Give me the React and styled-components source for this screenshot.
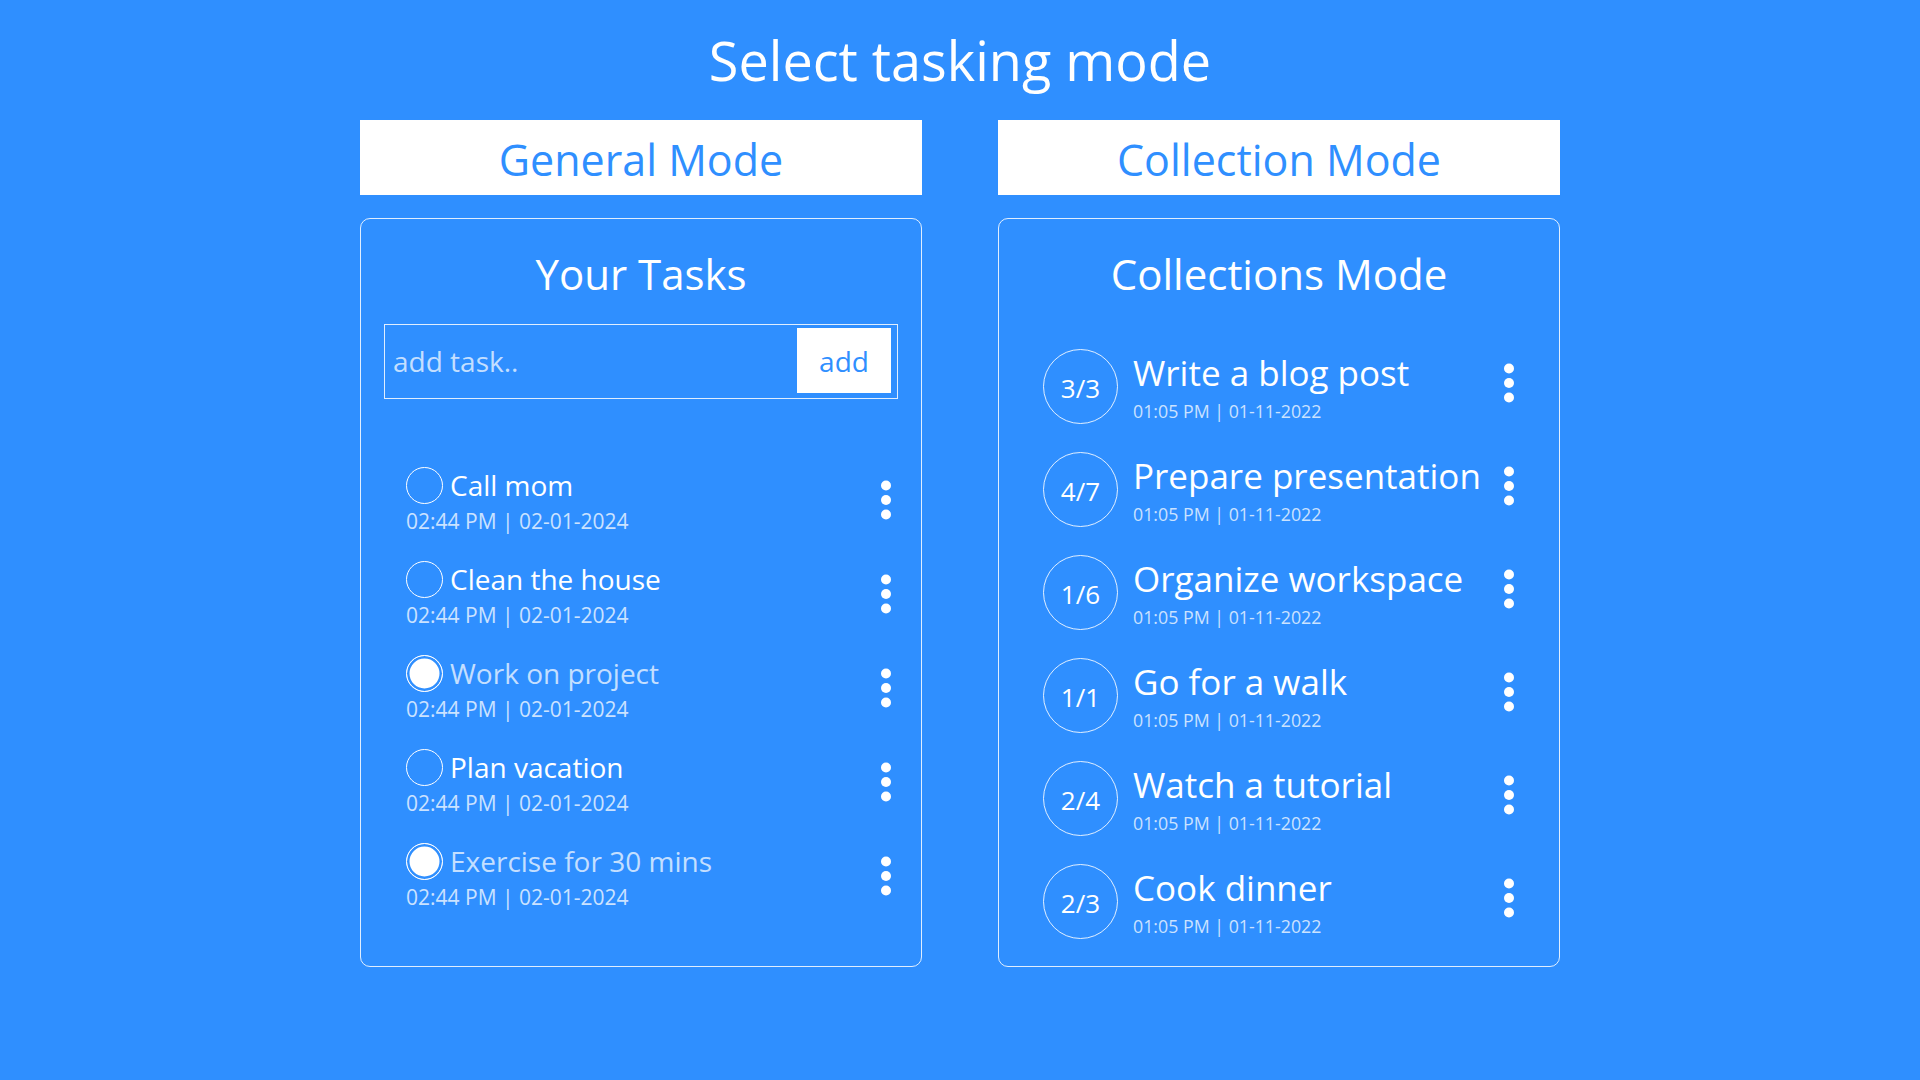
import React from "react";
import styled, { createGlobalStyle } from "styled-components";

const BLUE = "#2f8fff";

const GlobalStyle = createGlobalStyle`
  html, body {
    margin: 0;
    padding: 0;
    background: ${BLUE};
  }
  body {
    font-family: "Segoe UI", "Open Sans", "Noto Sans", sans-serif;
    color: #ffffff;
  }
  * { box-sizing: border-box; }
`;

const Page = styled.main`
  min-height: 100vh;
  padding-top: 28px;
  display: flex;
  flex-direction: column;
  align-items: center;
`;

const Title = styled.h1`
  margin: 0;
  font-size: 54px;
  line-height: 64px;
  font-weight: 400;
  color: #ffffff;
  text-align: center;
`;

const Columns = styled.div`
  display: grid;
  grid-template-columns: 562px 562px;
  column-gap: 76px;
  margin-top: 28px;
`;

const Column = styled.section`
  display: flex;
  flex-direction: column;
  gap: 23px;
`;

const ModeButton = styled.button`
  height: 75px;
  border: none;
  background: #ffffff;
  color: ${BLUE};
  font-family: inherit;
  font-size: 43px;
  line-height: 1;
  padding: 4px 0 0;
  cursor: pointer;
  display: flex;
  align-items: center;
  justify-content: center;
`;

const Panel = styled.div`
  height: 749px;
  border: 1px solid rgba(255, 255, 255, 0.85);
  border-radius: 10px;
  padding-top: 30px;
  display: flex;
  flex-direction: column;
`;

const PanelTitle = styled.h2`
  margin: 0;
  font-size: 42px;
  line-height: 50px;
  font-weight: 400;
  text-align: center;
  color: #ffffff;
`;

const AddForm = styled.form`
  margin: 25px 23px 0;
  height: 75px;
  border: 1px solid rgba(255, 255, 255, 0.85);
  display: flex;
  align-items: stretch;
  padding: 3px 6px 5px 8px;
`;

const TaskInput = styled.input`
  flex: 1;
  min-width: 0;
  background: transparent;
  border: none;
  outline: none;
  color: #ffffff;
  font-family: inherit;
  font-size: 28px;
  padding: 0;
  &::placeholder {
    color: rgba(255, 255, 255, 0.72);
  }
`;

const AddButton = styled.button`
  width: 94px;
  border: none;
  background: #ffffff;
  color: ${BLUE};
  font-family: inherit;
  font-size: 28px;
  padding: 0;
  cursor: pointer;
`;

const TaskList = styled.ul`
  list-style: none;
  margin: 67px 0 0;
  padding: 0 23px 0 45px;
  display: flex;
  flex-direction: column;
  gap: 26px;
`;

const TaskRow = styled.li`
  height: 68px;
  display: flex;
  align-items: center;
  justify-content: space-between;
`;

const TaskMain = styled.div`
  display: flex;
  flex-direction: column;
`;

const TaskHead = styled.div`
  display: flex;
  align-items: center;
  gap: 7px;
`;

const Check = styled.span`
  width: 37px;
  height: 37px;
  border-radius: 50%;
  border: 1.5px solid #ffffff;
  flex: none;
  background: ${(p) => (p.$done ? "#ffffff" : "transparent")};
  box-shadow: ${(p) => (p.$done ? `inset 0 0 0 2.5px ${BLUE}` : "none")};
`;

const TaskName = styled.span`
  font-size: 28px;
  line-height: 37px;
  color: ${(p) => (p.$done ? "rgba(255,255,255,0.72)" : "#ffffff")};
`;

const DateText = styled.span`
  font-size: ${(p) => (p.$small ? "17.8px" : "21px")};
  line-height: ${(p) => (p.$small ? "22px" : "26px")};
  margin-top: ${(p) => (p.$small ? "6px" : "4px")};
  color: rgba(255, 255, 255, 0.75);
  white-space: nowrap;
`;

const DotsButton = styled.button`
  width: 24px;
  height: 40px;
  border: none;
  background: transparent;
  padding: 0;
  margin-bottom: ${(p) => (p.$raised ? "7px" : "0")};
  display: flex;
  align-items: center;
  justify-content: center;
  flex: none;
  cursor: pointer;
`;

const CollectionList = styled.ul`
  list-style: none;
  margin: 50px 0 0;
  padding: 0 38px 0 44px;
  display: flex;
  flex-direction: column;
  gap: 28px;
`;

const CollectionRow = styled.li`
  height: 75px;
  display: flex;
  align-items: center;
`;

const CountCircle = styled.span`
  width: 75px;
  height: 75px;
  border-radius: 50%;
  border: 1px solid rgba(255, 255, 255, 0.85);
  display: flex;
  align-items: center;
  justify-content: center;
  font-size: 26px;
  padding-top: 3px;
  flex: none;
`;

const CollectionText = styled.div`
  flex: 1;
  align-self: flex-start;
  margin: 3px 0 0 15px;
  display: flex;
  flex-direction: column;
`;

const CollectionName = styled.span`
  font-size: 35px;
  line-height: 42px;
  color: #ffffff;
  white-space: nowrap;
`;

const Dots = () => (
  <svg width="24" height="40" viewBox="0 0 24 40" aria-hidden="true">
    <circle cx="12" cy="5.5" r="5" fill="#ffffff" />
    <circle cx="12" cy="20" r="5" fill="#ffffff" />
    <circle cx="12" cy="34.5" r="5" fill="#ffffff" />
  </svg>
);

const tasks = [
  { name: "Call mom", done: false },
  { name: "Clean the house", done: false },
  { name: "Work on project", done: true },
  { name: "Plan vacation", done: false },
  { name: "Exercise for 30 mins", done: true },
];

const collections = [
  { count: "3/3", name: "Write a blog post" },
  { count: "4/7", name: "Prepare presentation" },
  { count: "1/6", name: "Organize workspace" },
  { count: "1/1", name: "Go for a walk" },
  { count: "2/4", name: "Watch a tutorial" },
  { count: "2/3", name: "Cook dinner" },
];

export default function App() {
  return (
    <>
      <GlobalStyle />
      <Page>
        <Title>Select tasking mode</Title>
        <Columns>
          <Column>
            <ModeButton type="button">General Mode</ModeButton>
            <Panel>
              <PanelTitle>Your Tasks</PanelTitle>
              <AddForm onSubmit={(e) => e.preventDefault()}>
                <TaskInput placeholder="add task.." />
                <AddButton type="submit">add</AddButton>
              </AddForm>
              <TaskList>
                {tasks.map((t) => (
                  <TaskRow key={t.name}>
                    <TaskMain>
                      <TaskHead>
                        <Check $done={t.done} />
                        <TaskName $done={t.done}>{t.name}</TaskName>
                      </TaskHead>
                      <DateText>02:44 PM | 02-01-2024</DateText>
                    </TaskMain>
                    <DotsButton type="button">
                      <Dots />
                    </DotsButton>
                  </TaskRow>
                ))}
              </TaskList>
            </Panel>
          </Column>
          <Column>
            <ModeButton type="button">Collection Mode</ModeButton>
            <Panel>
              <PanelTitle>Collections Mode</PanelTitle>
              <CollectionList>
                {collections.map((c) => (
                  <CollectionRow key={c.name}>
                    <CountCircle>{c.count}</CountCircle>
                    <CollectionText>
                      <CollectionName>{c.name}</CollectionName>
                      <DateText $small>01:05 PM | 01-11-2022</DateText>
                    </CollectionText>
                    <DotsButton type="button" $raised>
                      <Dots />
                    </DotsButton>
                  </CollectionRow>
                ))}
              </CollectionList>
            </Panel>
          </Column>
        </Columns>
      </Page>
    </>
  );
}
